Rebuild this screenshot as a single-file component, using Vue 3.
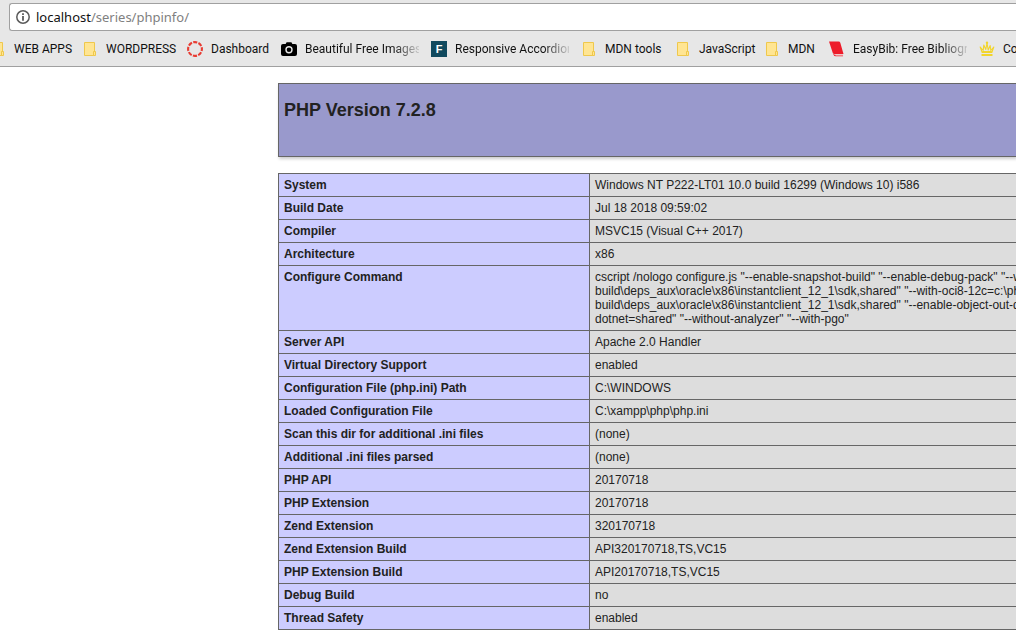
<script setup>
const bookmarks = [
  { label: 'WEB APPS', icon: 'folder' },
  { label: 'WORDPRESS', icon: 'folder' },
  { label: 'Dashboard', icon: 'ring' },
  { label: 'Beautiful Free Images', icon: 'camera', long: true },
  { label: 'Responsive Accordion', icon: 'letter', long: true },
  { label: 'MDN tools', icon: 'folder' },
  { label: 'JavaScript', icon: 'folder' },
  { label: 'MDN', icon: 'folder' },
  { label: 'EasyBib: Free Bibliography', icon: 'book', long: true },
  { label: 'Color', icon: 'crown' },
]

const configure = [
  'cscript /nologo configure.js "--enable-snapshot-build" "--enable-debug-pack" "--with-pdo-oci=c:\\php-snap-',
  'build\\deps_aux\\oracle\\x86\\instantclient_12_1\\sdk,shared" "--with-oci8-12c=c:\\php-snap-',
  'build\\deps_aux\\oracle\\x86\\instantclient_12_1\\sdk,shared" "--enable-object-out-dir=../obj/" "--enable-com-',
  'dotnet=shared" "--without-analyzer" "--with-pgo"',
].join('\n')

const rows = [
  ['System', 'Windows NT P222-LT01 10.0 build 16299 (Windows 10) i586'],
  ['Build Date', 'Jul 18 2018 09:59:02'],
  ['Compiler', 'MSVC15 (Visual C++ 2017)'],
  ['Architecture', 'x86'],
  ['Configure Command', configure],
  ['Server API', 'Apache 2.0 Handler'],
  ['Virtual Directory Support', 'enabled'],
  ['Configuration File (php.ini) Path', 'C:\\WINDOWS'],
  ['Loaded Configuration File', 'C:\\xampp\\php\\php.ini'],
  ['Scan this dir for additional .ini files', '(none)'],
  ['Additional .ini files parsed', '(none)'],
  ['PHP API', '20170718'],
  ['PHP Extension', '20170718'],
  ['Zend Extension', '320170718'],
  ['Zend Extension Build', 'API320170718,TS,VC15'],
  ['PHP Extension Build', 'API20170718,TS,VC15'],
  ['Debug Build', 'no'],
  ['Thread Safety', 'enabled'],
]
</script>

<template>
  <div class="window">
    <header class="chrome">
      <div class="address">
        <button class="info" type="button" aria-label="View site information">
          <svg width="14" height="14" viewBox="0 0 14 14">
            <circle cx="7" cy="7" r="6.2" fill="none" stroke="#5a5a5a" stroke-width="1.5" />
            <path d="M6.1 3.2h1.8v1.7H6.1zM6.1 6h1.8v4.8H6.1z" fill="#5a5a5a" />
          </svg>
        </button>
        <a class="url" href="#"><span class="host">localhost</span>/series/phpinfo/</a>
      </div>
      <nav class="bookmarks" aria-label="Bookmarks">
        <a v-for="(b, i) in bookmarks" :key="i" class="bookmark" href="#">
          <svg class="icon" width="16" height="16" viewBox="0 0 16 16">
            <g v-if="b.icon === 'folder'" stroke="#efc84c">
              <path d="M2.5 1.5h10v13h-10z" fill="#ffe593" />
              <path d="M11.5 10.5h2v4h-2z" fill="#ffe593" />
            </g>
            <circle v-else-if="b.icon === 'ring'" cx="8" cy="8" r="6.9" fill="none" stroke="#e83b32" stroke-width="2.1" stroke-dasharray="4.1 1.32" stroke-dashoffset="2.05" />
            <g v-else-if="b.icon === 'camera'">
              <path d="M2 3h2.6l1-1.8h4.8l1 1.8H14a2 2 0 0 1 2 2v8a2 2 0 0 1-2 2H2a2 2 0 0 1-2-2V5a2 2 0 0 1 2-2z" fill="#000" />
              <circle cx="8" cy="8.8" r="3" fill="none" stroke="#e8e8e8" stroke-width="1.4" />
            </g>
            <g v-else-if="b.icon === 'letter'">
              <path d="M0 0h16v16H0z" fill="#10495e" />
              <text x="8" y="12" text-anchor="middle" class="letter">F</text>
            </g>
            <g v-else-if="b.icon === 'book'">
              <path d="M0 .6h9.500q1.500 0 1.800 1.200l3.200 11.200H5.500q-1.400 0-1.800-1.200z" fill="#ed1c2a" />
              <path d="M3.500 11.500q.4 2 2.500 2.200h8v1.500H7q-2 0-2.500-1.500z" fill="#ed1c2a" />
              <path d="M6.500 13.500h7.500v1H6.500z" fill="#f8dcdc" />
            </g>
            <g v-else>
              <g fill="none" stroke="#f2d52c" stroke-width="1.100" stroke-linejoin="round">
                <path d="M1.200 6l2 5.500h9.600l2-5.500-3 3.500-.6-5-2 4.500L8 2 6.800 8.500l-2-4.500-.6 5.500z" />
              </g>
              <path d="M3 10h10l-.8 2H3.800zM2.500 13h11v2h-11z" fill="#f2d52c" />
              <circle cx="8" cy="1.800" r="1.200" fill="#f2d52c" />
            </g>
          </svg>
          <span class="label" :class="{ fade: b.long }">{{ b.label }}</span>
        </a>
      </nav>
    </header>
    <main class="page">
      <div class="banner"><h1>PHP Version 7.2.8</h1></div>
      <table>
        <tbody>
          <tr v-for="row in rows" :key="row[0]">
            <th scope="row">{{ row[0] }}</th>
            <td>{{ row[1] }}</td>
          </tr>
        </tbody>
      </table>
    </main>
  </div>
</template>

<style>
body {
  margin: 0;
  background: #fff;
}
</style>

<style scoped>
.window {
  min-height: 100vh;
  overflow: hidden;
  background: #fff;
}
.chrome {
  padding-top: 3px;
  background: #e7e7e7;
  border-bottom: 1px solid #a0a0a0;
  font-family: "Noto Sans", "Open Sans", sans-serif;
}
.address {
  display: flex;
  align-items: center;
  gap: 6px;
  box-sizing: border-box;
  height: 28px;
  margin-left: 9px;
  padding-left: 6px;
  background: #fff;
  border: 1px solid #a0a0a0;
  border-right: 0;
  border-radius: 3px 0 0 3px;
}
.info {
  display: flex;
  padding: 0;
  border: 0;
  background: none;
}
.url {
  color: #808080;
  font-size: 13px;
  line-height: 20px;
  text-decoration: none;
}
.host {
  color: #111;
}
.bookmarks {
  display: grid;
  grid-template-columns: 92px 105px 94px 150px 150px 94px 89px 65px 150px 90px;
  align-items: center;
  height: 35px;
  margin-left: -10px;
}
.bookmark {
  display: flex;
  align-items: center;
  gap: 8px;
  color: #111;
  font-family: Roboto, "Noto Sans", sans-serif;
  font-size: 12px;
  line-height: 18px;
  text-decoration: none;
  white-space: nowrap;
}
.icon {
  flex: none;
}
.letter {
  fill: #fff;
  font: bold 11px "Liberation Sans", Arial, sans-serif;
}
.fade {
  width: 114px;
  overflow: hidden;
  mask-image: linear-gradient(to right, #000 88px, transparent 118px);
}
.page {
  padding: 16px 0 0 278px;
  color: #222;
  font-family: "Liberation Sans", Arial, sans-serif;
}
.banner {
  box-sizing: border-box;
  height: 74px;
  padding: 16px 5px;
  background: #9999cc;
  border: 1px solid #666;
  border-right: 0;
  box-shadow: 1px 2px 3px #ccc;
}
h1 {
  margin: 0;
  font-size: 18px;
  line-height: 20px;
}
table {
  width: 100%;
  margin-top: 16px;
  table-layout: fixed;
  border-collapse: collapse;
}
th,
td {
  padding: 4px 5px;
  border: 1px solid #666;
  font-size: 12px;
  line-height: 14px;
  text-align: left;
  vertical-align: baseline;
}
th {
  width: 300px;
  background: #ccccff;
}
td {
  overflow: hidden;
  background: #ddd;
  border-right: 0;
  white-space: pre;
}
</style>
